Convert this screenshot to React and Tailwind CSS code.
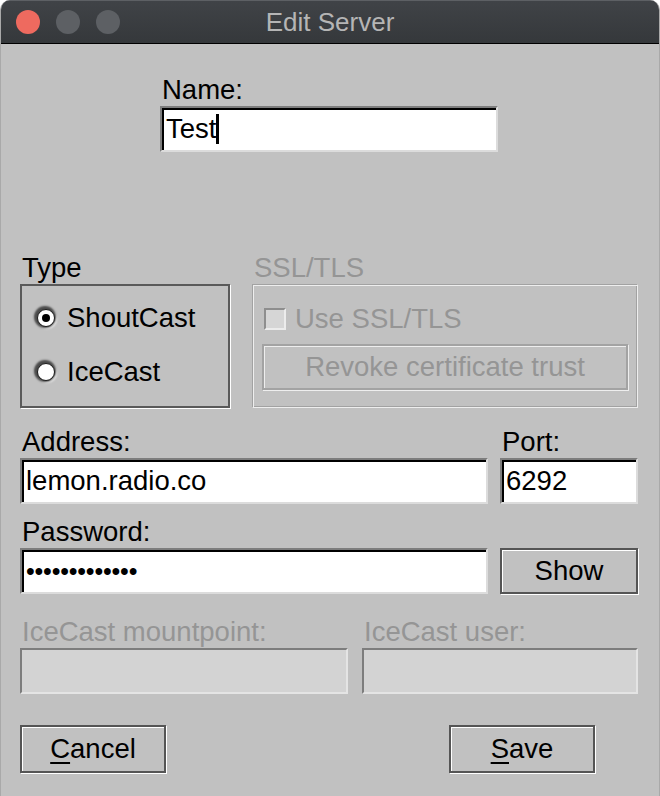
import React from 'react';

const font = { fontFamily: '"Liberation Sans", Arial, sans-serif' };

// sunken text entry, Tk style
const Entry = ({ value, caret, disabled, className = '' }) => (
  <div
    className={`h-[46px] flex items-center pl-[4px] border-2 ${
      disabled
        ? 'bg-[#d3d3d3] border-t-[#7d7d7d] border-l-[#7d7d7d] border-b-[#e4e4e4] border-r-[#e4e4e4]'
        : 'bg-white border-t-[#7d7d7d] border-l-[#7d7d7d] border-b-[#dcdcdc] border-r-[#dcdcdc] shadow-[inset_2px_2px_0_#000]'
    }`}
  >
    <span className={`text-black leading-none ${className}`}>{value}</span>
    {caret && <span className="w-[3px] h-[30px] bg-black"></span>}
  </div>
);

const Button = ({ children, className = '' }) => (
  <div
    className={`h-[46px] flex items-center justify-center border-2 border-[#555555] shadow-[1px_1px_0_#ffffff,inset_1px_1px_0_#ffffff] text-black ${className}`}
  >
    {children}
  </div>
);

const Radio = ({ checked, label }) => (
  <div className="flex items-center h-[32px]">
    <span className="w-[25px] h-[25px] flex items-center justify-center">
      <span className="w-[18px] h-[18px] rounded-full bg-white border border-[#1a1a1a] shadow-[-1px_-1px_2px_2px_#4a4a4a,1px_1px_2px_1px_#f2f2f2] flex items-center justify-center">
        {checked && <span className="w-[8px] h-[8px] rounded-full bg-black"></span>}
      </span>
    </span>
    <span className="ml-[9px] leading-[32px]">{label}</span>
  </div>
);

const Label = ({ children, muted, className = '' }) => (
  <div className={`leading-[32px] pl-[2px] ${muted ? 'text-[#959595]' : 'text-black'} ${className}`}>
    {children}
  </div>
);

export default function App() {
  return (
    <div className="w-[660px] h-[796px] bg-[#c1c1c1] rounded-t-[10px] overflow-hidden border-x border-[#a9a9a9]">
      {/* title bar */}
      <div className="h-[44px] bg-gradient-to-b from-[#404347] to-[#35383b] border-t border-[#5d6064] border-b border-b-black flex items-center relative">
        <div className="flex gap-[16px] pl-[15px]">
          <span className="w-[24px] h-[24px] rounded-full bg-[#ee6a5f]"></span>
          <span className="w-[24px] h-[24px] rounded-full bg-[#5d6064]"></span>
          <span className="w-[24px] h-[24px] rounded-full bg-[#5d6064]"></span>
        </div>
        <div className="absolute inset-0 flex items-center justify-center text-[26px] text-[#b5b5b5]" style={font}>
          Edit Server
        </div>
      </div>

      <div className="pl-[19px] pr-[21px] pt-[30px] text-[27.5px]" style={font}>
        {/* name */}
        <div className="ml-[140px] w-[338px]">
          <Label>Name:</Label>
          <Entry value="Test" caret />
        </div>

        {/* type + ssl */}
        <div className="mt-[100px] flex gap-[22px]">
          <div className="w-[210px]">
            <Label>Type</Label>
            <div className="h-[124px] border-2 border-[#5a5a5a] shadow-[1px_1px_0_#ffffff] pt-[16px] pl-[11px] flex flex-col gap-[22px]">
              <Radio checked label="ShoutCast" />
              <Radio label="IceCast" />
            </div>
          </div>
          <div className="flex-1">
            <Label muted>SSL/TLS</Label>
            <div className="h-[124px] border border-t-[#a2a2a2] border-l-[#a2a2a2] border-b-[#eeeeee] border-r-[#eeeeee] shadow-[inset_1px_1px_0_#eeeeee,inset_-1px_-1px_0_#a2a2a2] pt-[18px] px-[9px]">
              <div className="flex items-center h-[32px] pl-[2px]">
                <span className="w-[22px] h-[22px] bg-[#d6d6d6] border-2 border-t-[#8e8e8e] border-l-[#8e8e8e] border-b-[#ececec] border-r-[#ececec]"></span>
                <span className="ml-[9px] text-[#959595]">Use SSL/TLS</span>
              </div>
              <div className="mt-[9px] h-[46px] flex items-center justify-center border-2 border-[#a3a3a3] shadow-[1px_1px_0_#eeeeee,inset_1px_1px_0_#eeeeee] text-[#959595]">
                Revoke certificate trust
              </div>
            </div>
          </div>
        </div>

        {/* address / port */}
        <div className="mt-[18px] flex gap-[12px]">
          <div className="w-[468px]">
            <Label>Address:</Label>
            <Entry value="lemon.radio.co" />
          </div>
          <div className="flex-1">
            <Label>Port:</Label>
            <Entry value="6292" />
          </div>
        </div>

        {/* password / show */}
        <div className="mt-[12px] flex gap-[12px]">
          <div className="w-[468px]">
            <Label>Password:</Label>
            <Entry value="•••••••••••••" className="text-[25px] tracking-[-0.2px]" />
          </div>
          <div className="flex-1 pt-[32px]">
            <Button>Show</Button>
          </div>
        </div>

        {/* icecast */}
        <div className="mt-[22px] flex gap-[14px]">
          <div className="w-[328px]">
            <Label muted>IceCast mountpoint:</Label>
            <Entry disabled value="" />
          </div>
          <div className="flex-1">
            <Label muted>IceCast user:</Label>
            <Entry disabled value="" />
          </div>
        </div>

        {/* actions */}
        <div className="mt-[31px] flex">
          <Button className="w-[146px] h-[48px]">
            <span><span className="underline underline-offset-[4px] decoration-[2px]">C</span>ancel</span>
          </Button>
          <Button className="w-[146px] h-[48px] ml-[283px]">
            <span><span className="underline underline-offset-[4px] decoration-[2px]">S</span>ave</span>
          </Button>
        </div>
      </div>
    </div>
  );
}
